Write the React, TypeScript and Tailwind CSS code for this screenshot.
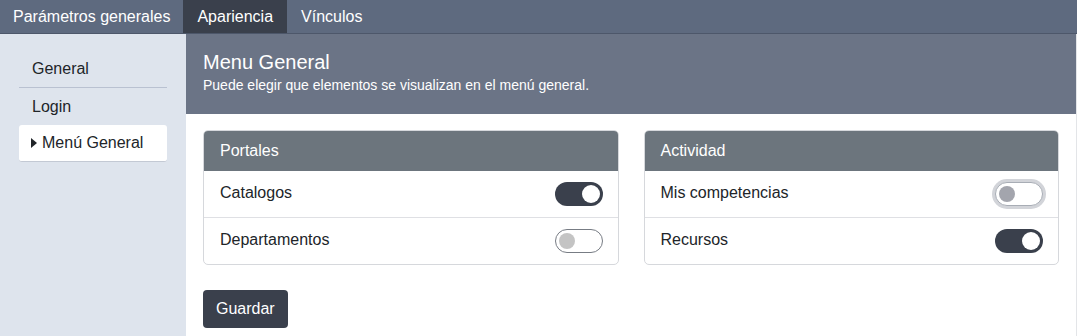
import React from "react";

function Toggle({ on, focus }: { on: boolean; focus?: boolean }) {
  if (on) {
    return (
      <div className="w-[48px] h-[24px] rounded-full bg-[#3a404c] flex items-center justify-end pr-[3px]">
        <div className="w-[18px] h-[18px] rounded-full bg-white" />
      </div>
    );
  }
  if (focus) {
    return (
      <div className="w-[48px] h-[24px] rounded-full bg-white border border-[#a8adb5] ring-[3px] ring-[#d2d4d9] flex items-center pl-[3px]">
        <div className="w-[16px] h-[16px] rounded-full bg-[#a3a5ad]" />
      </div>
    );
  }
  return (
    <div className="w-[48px] h-[24px] rounded-full bg-white border border-[#777c84] flex items-center pl-[3px]">
      <div className="w-[16px] h-[16px] rounded-full bg-[#c4c4c4]" />
    </div>
  );
}

function Card({ title, rows }: { title: string; rows: { label: string; on: boolean; focus?: boolean }[] }) {
  return (
    <div className="rounded-[5px] border border-[#d6d8dc] overflow-hidden bg-white">
      <div className="h-[40px] bg-[#6c757d] text-white px-[16px] flex items-center text-[16px]">{title}</div>
      {rows.map((r, i) => (
        <div
          key={r.label}
          className={`flex items-center justify-between pl-[16px] pr-[15px] text-[16px] text-[#212529] ${i > 0 ? "h-[47px] border-t border-[#dfe0e4]" : "h-[46px]"}`}
        >
          <span className="-mt-[3px]">{r.label}</span>
          <Toggle on={r.on} focus={r.focus} />
        </div>
      ))}
    </div>
  );
}

export default function App() {
  return (
    <div className="w-[1077px] h-[336px] overflow-hidden flex flex-col bg-white" style={{ fontFamily: '"Liberation Sans", Arial, sans-serif' }}>
      <nav className="h-[34px] bg-[#5e6a7f] border-b border-[#4d576a] flex text-white text-[16px]">
        <div className="px-[13px] flex items-center">Parámetros generales</div>
        <div className="px-[14px] flex items-center bg-[#3a404c]">Apariencia</div>
        <div className="px-[14px] flex items-center">Vínculos</div>
      </nav>
      <div className="flex flex-1">
        <aside className="w-[186px] bg-[#dee4ed] pt-[17px] px-[19px] text-[16px] text-[#212529]">
          <div className="h-[37px] border-b border-[#b9c1d1] flex items-center pl-[13px]">General</div>
          <div className="h-[37px] flex items-center pl-[13px]">Login</div>
          <div className="h-[37px] bg-white rounded-[3px] border-b border-[#c3c9d4] flex items-center pl-[12px] gap-[5px]">
            <svg width="6" height="10" viewBox="0 0 6 10"><path d="M0 0 L6 5 L0 10 Z" fill="#212529" /></svg>
            <span>Menú General</span>
          </div>
        </aside>
        <main className="flex-1 border-r border-[#e3e5e8] flex flex-col">
          <div className="h-[80px] bg-[#6b7486] text-white px-[17px] pt-[15px]">
            <div className="text-[20px] leading-[26px]">Menu General</div>
            <div className="text-[14px] leading-[18px] mt-[1px]">Puede elegir que elementos se visualizan en el menú general.</div>
          </div>
          <div className="px-[17px] pt-[16px]">
            <div className="grid grid-cols-2 gap-[25px]">
              <Card title="Portales" rows={[{ label: "Catalogos", on: true }, { label: "Departamentos", on: false }]} />
              <Card title="Actividad" rows={[{ label: "Mis competencias", on: false, focus: true }, { label: "Recursos", on: true }]} />
            </div>
            <button className="mt-[25px] h-[38px] px-[13px] rounded-[4px] bg-[#3a404c] text-white text-[16px]">Guardar</button>
          </div>
        </main>
      </div>
    </div>
  );
}
